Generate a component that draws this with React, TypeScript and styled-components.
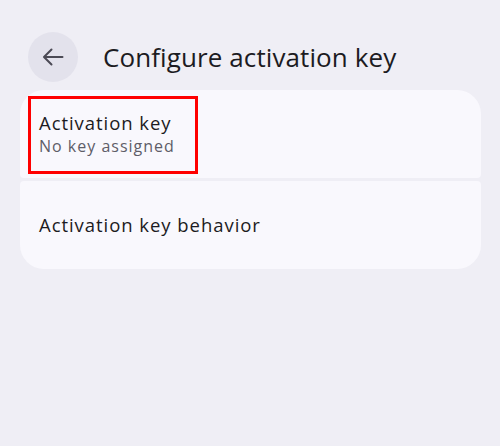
import React from 'react';
import styled, { createGlobalStyle } from 'styled-components';

const GlobalStyle = createGlobalStyle`
  html, body {
    margin: 0;
    padding: 0;
    background: #efeef5;
  }
  body {
    font-family: "Open Sans", "Noto Sans", sans-serif;
    -webkit-font-smoothing: antialiased;
  }
`;

const Screen = styled.div`
  width: 500px;
  height: 446px;
  background: #efeef5;
  padding: 32px 19px 0 20px;
  box-sizing: border-box;
`;

const Header = styled.div`
  display: flex;
  align-items: center;
  gap: 25px;
  padding-left: 8px;
  height: 49px;
`;

const BackButton = styled.button`
  width: 50px;
  height: 50px;
  border-radius: 50%;
  border: none;
  background: #e3e2ec;
  display: flex;
  align-items: center;
  justify-content: center;
  padding: 0;
  cursor: pointer;
`;

const Title = styled.h1`
  margin: 0;
  font-size: 26px;
  font-weight: 400;
  color: #1c1b22;
  letter-spacing: 0.1px;
`;

const List = styled.div`
  display: flex;
  flex-direction: column;
  gap: 3px;
  margin-top: 9px;
`;

const Item = styled.div<{ $first?: boolean; $last?: boolean }>`
  position: relative;
  height: 88px;
  background: #f9f8fd;
  border-radius: ${p => (p.$first ? '24px 24px 4px 4px' : p.$last ? '4px 4px 24px 24px' : '4px')};
  display: flex;
  flex-direction: column;
  justify-content: center;
  padding: 0 19px;
`;

const ItemTitle = styled.div`
  font-size: 18.5px;
  color: #1c1b22;
  line-height: 24px;
  letter-spacing: 0.95px;
`;

const ItemSummary = styled.div`
  font-size: 16px;
  color: #5e5d68;
  line-height: 22px;
  letter-spacing: 1px;
`;

const Highlight = styled.div`
  position: absolute;
  left: 8px;
  top: 6px;
  width: 170px;
  height: 78px;
  border: 3px solid #ff0000;
  box-sizing: border-box;
  pointer-events: none;
`;

const BackArrow = () => (
  <svg width="24" height="24" viewBox="0 0 24 24" fill="none">
    <path d="M21.5 12H3.5M10.5 4.5L3 12l7.5 7.5" stroke="#4b4a55" strokeWidth="2" strokeLinecap="round" strokeLinejoin="round" />
  </svg>
);

export default function App() {
  return (
    <>
      <GlobalStyle />
      <Screen>
        <Header>
          <BackButton aria-label="Back">
            <BackArrow />
          </BackButton>
          <Title>Configure activation key</Title>
        </Header>
        <List>
          <Item $first>
            <ItemTitle>Activation key</ItemTitle>
            <ItemSummary>No key assigned</ItemSummary>
            <Highlight />
          </Item>
          <Item $last>
            <ItemTitle>Activation key behavior</ItemTitle>
          </Item>
        </List>
      </Screen>
    </>
  );
}
